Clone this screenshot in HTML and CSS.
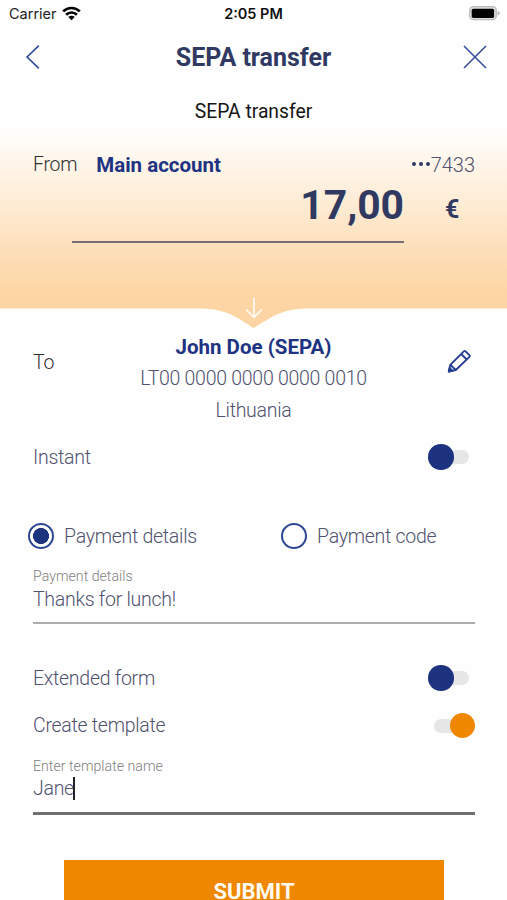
FILE: index.html
```html
<!DOCTYPE html>
<html lang="en">
<head>
<meta charset="utf-8">
<title>SEPA transfer</title>
<link rel="stylesheet" href="styles.css">
</head>
<body>
<div class="screen">
  <header class="status">
    <div class="carrier"><span class="carrier-name">Carrier</span>
      <svg class="wifi" width="19" height="15" viewBox="0 0 19 15" fill="none" stroke="#000" stroke-width="2.7"><path d="M1.2 5.4a11.8 11.8 0 0 1 16.6 0M4.1 8.700a7.700 7.700 0 0 1 10.800 0"/><path d="M9.500 14.200 6.300 11a4.600 4.600 0 0 1 6.400 0z" fill="#000" stroke="none"/></svg>
    </div>
    <span class="clock">2:05 PM</span>
    <svg class="battery" width="31" height="15" viewBox="0 0 31 15"><rect x=".7" y=".7" width="26.600" height="13" rx="3.800" fill="#ddd" stroke="#bbb" stroke-width="1.300"/><rect x="2.700" y="2.700" width="22.400" height="9.200" rx="1.600" fill="#000"/><path d="M28.700 5v4.600q1.900-.8 1.900-2.300T28.700 5z" fill="#aaa"/></svg>
  </header>
  <nav class="nav">
    <svg width="16" height="26" viewBox="0 0 16 26" fill="none" stroke="#344f9d" stroke-width="1.700"><path d="M13.800 1.700 2.100 13l11.700 11.300"/></svg>
    <h1>SEPA transfer</h1>
    <svg width="24" height="24" viewBox="0 0 24 24" fill="none" stroke="#344f9d" stroke-width="1.600"><path d="M1 1l22 22M23 1 1 23"/></svg>
  </nav>
  <p class="subtitle"><span>SEPA transfer</span></p>
  <section class="source">
    <div class="from-row"><span class="label">From</span><strong class="account">Main account</strong><span class="mask"><i></i><i></i><i></i></span><span class="number">7433</span></div>
    <div class="amount-row"><div class="amount"><span>17,00</span></div><span class="currency">€</span></div>
  </section>
  <svg class="notch" width="507" height="24" viewBox="0 0 507 24"><path d="M0 0H507V.5H306C279 1 268 12 253.700 20 240 12 229 1 202 .5H0z" fill="#fdd5a4"/></svg>
  <svg class="arrow" width="20" height="24" viewBox="0 0 20 24" fill="none" stroke="#fffaf3" stroke-width="1.700"><path d="M10 1.500V21M2 13.500l8 7.700 8-7.700"/></svg>
  <section class="payee">
    <span class="label to">To</span>
    <div class="recipient"><strong class="name">John Doe (SEPA)</strong><span class="iban">LT00 0000 0000 0000 0010</span><span class="country">Lithuania</span></div>
    <svg class="pencil" width="24" height="24" viewBox="0 0 24 24" fill="none" stroke="#263f91" stroke-width="1.900" stroke-linejoin="round"><path d="M1.800 22.500 3.300 15.800 16.800 2.400q.9-.8 1.800 0l3.800 3.700q.8.900 0 1.800L8.800 21z"/><path d="M14.200 5l5.500 5.500M3.300 15.800l5.500 5.200"/><path d="M1.800 22.500l.8-3.500 2.700 2.600z" fill="#263f91"/></svg>
  </section>
  <div class="setting instant"><span>Instant</span><span class="toggle"></span></div>
  <div class="choices">
    <div class="choice"><span class="radio selected"></span><span>Payment details</span></div>
    <div class="choice"><span class="radio"></span><span>Payment code</span></div>
  </div>
  <div class="field">
    <span class="field-label">Payment details</span>
    <span class="value">Thanks for lunch!</span>
  </div>
  <div class="setting extended"><span>Extended form</span><span class="toggle"></span></div>
  <div class="setting template"><span>Create template</span><span class="toggle on"></span></div>
  <div class="field active">
    <span class="field-label">Enter template name</span>
    <span class="value">Jane<span class="caret"></span></span>
  </div>
  <div class="submit"><span>SUBMIT</span></div>
</div>
</body>
</html>
```
FILE: styles.css
```css
* { box-sizing: border-box; }
body { margin: 0; background: #fff; font-family: Roboto, "Liberation Sans", sans-serif; }
svg { display: block; flex: none; }
.screen { width: 507px; height: 900px; overflow: hidden; background: #fefefe; color: #50526f; font-size: 19.500px; font-weight: 300; letter-spacing: -.27px; }
.status { height: 28px; padding: 0 7px 0 9px; display: grid; grid-template-columns: 1fr auto 1fr; align-items: center; font-family: Inter, sans-serif; color: #222; letter-spacing: 0; }
.carrier { display: flex; align-items: center; gap: 6px; font-size: 14.500px; line-height: 18px; padding-bottom: 1px; margin-right: 2px; font-weight: 400; }
.wifi { margin: -1px 0 0 -1px; }
.clock { font-size: 14.500px; font-weight: 600; color: #111; padding-bottom: 1px; margin-left: -2px; }
.battery { justify-self: end; margin-top: -1px; }
.nav { height: 58px; padding: 0 20px 0 25px; display: flex; justify-content: space-between; align-items: center; letter-spacing: 0; }
.nav h1 { margin: 2px 0 0 3px; font-size: 25px; line-height: 30px; font-weight: 700; color: #303961; }
.subtitle { margin: 0; height: 44px; display: flex; justify-content: center; align-items: center; padding-top: 7px; font-size: 19.300px; font-weight: 400; color: #151515; letter-spacing: 0; }
.source { height: 178px; background: linear-gradient(#fffefd 0, #fff7ed 15%, #feebd3 43%, #fddfb8 68%, #fdd5a4 92%); }
.from-row { height: 52px; padding: 18px 32px 0 33px; display: flex; align-items: center; line-height: 36px; }
.label { color: #303030; }
.account { margin-left: 19px; color: #203383; font-weight: 700; font-size: 20.500px; letter-spacing: 0; }
.mask { display: flex; gap: 3px; margin: -2px 0 0 auto; }
.mask i { width: 4px; height: 4px; border-radius: 50%; background: #303a62; }
.number { margin-left: 1px; font-size: 20px; letter-spacing: 0; }
.amount-row { display: flex; height: 60px; margin-left: 72px; color: #303961; font-weight: 700; letter-spacing: 0; }
.amount { width: 332px; height: 60.500px; border-bottom: 2px solid #756d78; text-align: right; font-size: 40.800px; line-height: 46px; }
.currency { margin-left: 41px; font-size: 25px; line-height: 55px; }
.notch { margin-bottom: -24px; }
.arrow { position: relative; top: -12px; margin: 0 auto -24px; }
.payee { height: 121px; padding: 23px 36px 0 33px; display: grid; grid-template-columns: 24px 1fr 24px; }
.to { line-height: 32px; margin-top: 16px; }
.recipient { display: flex; flex-direction: column; align-items: center; line-height: 32px; padding-left: 3px; }
.name { color: #203383; font-size: 20.500px; font-weight: 700; letter-spacing: 0; }
.pencil { margin-top: 18px; }
.setting { display: flex; justify-content: space-between; align-items: center; padding: 0 32px 0 33px; height: 48px; }
.instant { margin-top: 4px; }
.toggle { width: 47px; height: 26px; display: flex; align-items: center; position: relative; }
.toggle::before { content: ""; width: 35px; height: 14px; margin-left: 6px; border-radius: 7px; background: #e6e6e6; }
.toggle::after { content: ""; position: absolute; left: 0; top: 0; width: 25.500px; height: 25.500px; border-radius: 50%; background: #1e337f; }
.toggle.on::after { left: auto; right: 0; background: #f08700; }
.choices { display: grid; grid-template-columns: 253px 1fr; padding-left: 27.500px; height: 48px; margin-top: 31px; }
.choice { display: flex; align-items: center; gap: 10.500px; }
.radio { width: 26px; height: 26px; border: 2px solid #2d4794; border-radius: 50%; }
.radio.selected { background: radial-gradient(circle, #1e337f 7.700px, transparent 8.300px); }
.field { margin: 7px 32px 0 33px; height: 57px; border-bottom: 2px solid #acacac; display: flex; flex-direction: column; }
.field-label { font-size: 14.200px; line-height: 18px; color: #808080; letter-spacing: 0; }
.value { display: flex; align-items: center; height: 28px; }
.extended { margin-top: 30px; }
.template { margin-top: -.5px; }
.field.active { height: 58.500px; border-bottom: 3px solid #707070; }
.caret { width: 2px; height: 23px; background: #222; margin-left: -1px; }
.submit { width: 380px; height: 63px; margin: 45px 0 0 64px; background: #f08700; color: #fffaf0; text-align: center; font-size: 22px; font-weight: 700; line-height: 63px; letter-spacing: 0; }
```
